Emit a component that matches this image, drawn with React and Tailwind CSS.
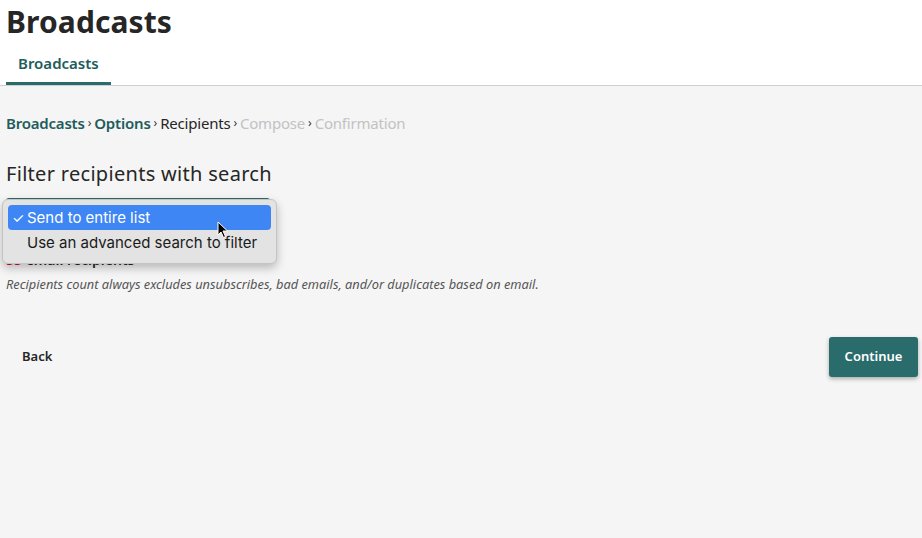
import React from "react";

export default function App() {
  return (
    <div className="w-[922px] h-[538px] bg-[#f5f5f5] overflow-hidden relative" style={{ fontFamily: '"Noto Sans", sans-serif' }}>
      <header className="bg-white border-b border-[#cfcfcf]">
        <h1 className="pl-[6px] pt-[2px] text-[30px] leading-[40px] font-bold text-[#262626] tracking-[0.1px]">Broadcasts</h1>
        <div className="flex pl-[6px] mt-[10px]">
          <div className="px-[12px] pb-[8px] border-b-[3px] border-[#2a6b6b] text-[15px] leading-[22px] font-semibold text-[#1f5c5c]">Broadcasts</div>
        </div>
      </header>

      <main className="px-[6px] pt-[26px]">
        <nav className="flex items-center text-[15px] leading-[22px] tracking-[-0.2px]">
          <span className="font-semibold text-[#1f5c5c]">Broadcasts</span>
          <span className="mx-[3px] text-[12px] text-[#333]">›</span>
          <span className="font-semibold text-[#1f5c5c]">Options</span>
          <span className="mx-[3px] text-[12px] text-[#333]">›</span>
          <span className="text-[#262626]">Recipients</span>
          <span className="mx-[3px] text-[12px] text-[#333]">›</span>
          <span className="text-[#c2c2c2]">Compose</span>
          <span className="mx-[3px] text-[12px] text-[#333]">›</span>
          <span className="text-[#c2c2c2]">Confirmation</span>
        </nav>

        <h2 className="mt-[26px] text-[20px] leading-[28px] text-[#262626] tracking-[0.3px]">Filter recipients with search</h2>

        <div className="relative mt-[10px]">
          <div className="w-[264px] h-[34px] border-2 border-[#2a6b6b] rounded-[3px] bg-white"></div>
          <div className="mt-[18px] text-[14px] leading-[20px] font-semibold text-[#262626]">
            <span className="text-[#d0021b]">55</span> email recipients
          </div>
          <p className="mt-[6px] text-[12.8px] leading-[16px] italic text-[#555]">
            Recipients count always excludes unsubscribes, bad emails, and/or duplicates based on email.
          </p>

          <div
            className="absolute left-[-4px] top-[1px] w-[275px] h-[65px] bg-[#e3e3e3] rounded-[6px] border border-[#c4c4c4] shadow-[0_4px_10px_rgba(0,0,0,0.25)] p-[5px] text-[15px] leading-[25px] text-[#1a1a1a]"
            style={{ fontFamily: 'Inter, "Noto Sans", sans-serif' }}
          >
            <div className="flex items-center h-[25px] bg-[#3f86f5] text-white rounded-[4px] pl-[4px]">
              <span className="w-[15px] text-[14px]">✓</span>
              <span>Send to entire list</span>
            </div>
            <div className="flex items-center h-[25px] pl-[19px]">Use an advanced search to filter</div>
          </div>
        </div>

        <div className="flex items-center justify-between mt-[45px]">
          <button className="ml-[16px] text-[13px] font-semibold text-[#262626]">Back</button>
          <button className="w-[89px] h-[40px] rounded-[3px] bg-[#2a6b6b] text-white text-[13px] font-semibold shadow-[0_2px_4px_rgba(0,0,0,0.3)] mr-[-2px]">Continue</button>
        </div>
      </main>

      <svg className="absolute left-[217px] top-[221px]" width="12" height="18" viewBox="0 0 12 18">
        <path d="M1 1 L1 14 L4 11 L6.5 16.5 L8.5 15.5 L6 10 L10.5 10 Z" fill="#000" stroke="#fff" strokeWidth="1" />
      </svg>
    </div>
  );
}
